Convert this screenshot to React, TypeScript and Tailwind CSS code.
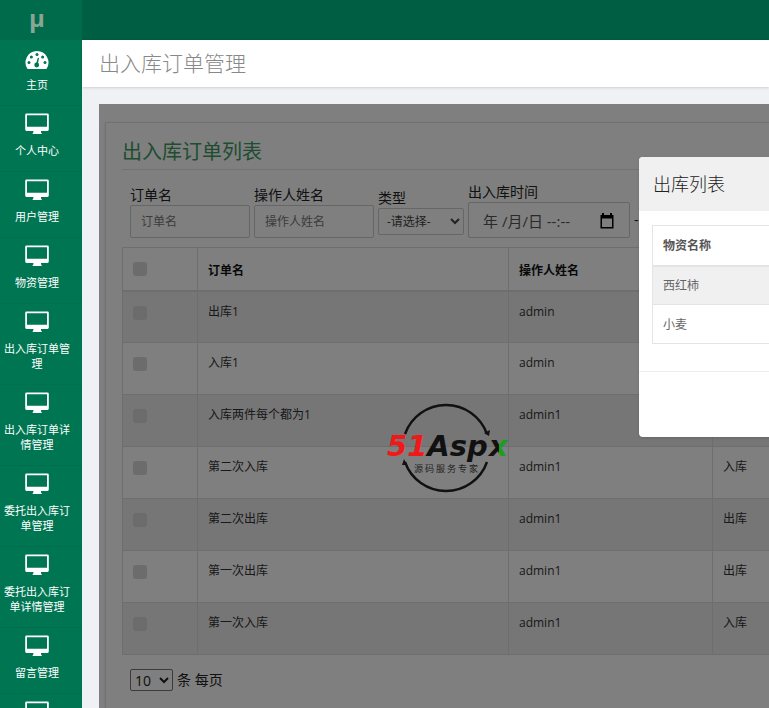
import { useState } from 'react';

const menu = ['个人中心', '用户管理', '物资管理', '出入库订单管理', '出入库订单详情管理', '委托出入库订单管理', '委托出入库订单详情管理', '留言管理'];

const orders = [
  { name: '出库1', operator: 'admin', type: '出库' },
  { name: '入库1', operator: 'admin', type: '入库' },
  { name: '入库两件每个都为1', operator: 'admin1', type: '入库' },
  { name: '第二次入库', operator: 'admin1', type: '入库' },
  { name: '第二次出库', operator: 'admin1', type: '出库' },
  { name: '第一次出库', operator: 'admin1', type: '出库' },
  { name: '第一次入库', operator: 'admin1', type: '入库' },
];

const goods = ['西红柿', '小麦'];

function GaugeIcon() {
  return (
    <svg viewBox="0 0 24 20" className="h-5 w-6" aria-hidden="true">
      <path d="M12 1a11.500 11.500 0 0 1 9.700 17.600q-.3.500-1 .5H3.300q-.7 0-1-.5A11.500 11.500 0 0 1 12 1z" fill="#fff" />
      <g fill="#007552">
        <circle cx="4" cy="12.500" r="1.500" />
        <circle cx="6.400" cy="7" r="1.500" />
        <circle cx="12" cy="4.600" r="1.500" />
        <circle cx="17.600" cy="7" r="1.500" />
        <circle cx="20" cy="12.500" r="1.500" />
        <circle cx="11.700" cy="15" r="2.400" />
        <path d="M12.800 7.800l1.200.3-1.300 7-1.900-.4z" />
      </g>
    </svg>
  );
}

function DesktopIcon() {
  return (
    <svg viewBox="0 0 24 22" className="h-[22px] w-6" fill="currentColor" aria-hidden="true">
      <path
        fillRule="evenodd"
        d="M1.500 .5h21a1.300 1.300 0 0 1 1.300 1.300v14.800a1.300 1.300 0 0 1-1.300 1.300H16v1.500l.7.500v1H7.700v-1l.7-.5v-1.500H1.500A1.300 1.300 0 0 1 .2 16.600V1.800A1.300 1.300 0 0 1 1.500 .5zM2 2.300v11.500h20V2.300z"
      />
    </svg>
  );
}

function Sidebar() {
  return (
    <aside className="w-[82px] shrink-0 bg-[#007552] text-white">
      <a href="#home" className="flex h-10 items-center justify-center bg-[#006b4a] pr-2 pb-1 text-2xl font-bold text-[#8aa596]">
        μ
      </a>
      <nav className="text-[11px] leading-[15px]">
        <a href="#index" className="flex min-h-[66px] flex-col items-center border-b border-[#006f4d] pt-[10px] pr-2 pb-3">
          <GaugeIcon />
          <span className="mt-[7px] text-center">主页</span>
        </a>
        {menu.map((item) => (
          <a key={item} href="#menu" className="flex min-h-[66px] flex-col items-center border-b border-[#006f4d] pt-[7px] pr-[9px] pb-[13px] pl-px">
            <DesktopIcon />
            <span className="mt-2 w-[70px] text-center">{item}</span>
          </a>
        ))}
        <a href="#menu" aria-label="更多" className="flex min-h-[66px] flex-col items-center pt-[7px] pr-[9px] pl-px">
          <DesktopIcon />
        </a>
      </nav>
    </aside>
  );
}

function Filters() {
  return (
    <form className="flex items-end gap-1 pl-2 text-sm leading-5 text-[#222]">
      <div className="flex w-[120px] shrink-0 flex-col">
        <label htmlFor="order">订单名</label>
        <input id="order" placeholder="订单名" className="h-[33px] rounded-xs border border-[#ccc] px-[10px] text-xs placeholder:text-[#777]" />
      </div>
      <div className="flex w-[120px] shrink-0 flex-col">
        <label htmlFor="operator">操作人姓名</label>
        <input id="operator" placeholder="操作人姓名" className="h-[33px] rounded-xs border border-[#ccc] px-[10px] text-xs placeholder:text-[#777]" />
      </div>
      <div className="flex w-[86px] shrink-0 flex-col pb-[3px]">
        <label htmlFor="type">类型</label>
        <select id="type" className="h-[27px] rounded-xs border border-[#ccc] bg-white px-1 text-xs text-[#444]">
          <option>-请选择-</option>
        </select>
      </div>
      <div className="flex w-[162px] shrink-0 flex-col">
        <label htmlFor="time">出入库时间</label>
        <div className="flex h-9 items-center rounded-xs border border-[#ccc] pt-[2px] pr-[14px] pl-[14px]">
          <input id="time" defaultValue="年 /月/日 --:--" className="w-full min-w-0 text-[15px] text-[#555]" />
          <button type="button" aria-label="选择日期" className="pb-px">
            <svg viewBox="0 0 16 16" className="h-4 w-4" fill="#000" aria-hidden="true">
              <path fillRule="evenodd" d="M3 0h2v2h6V0h2v2h1.500v13.500h-13V2H3zM3 5.500V14h10V5.500z" />
            </svg>
          </button>
        </div>
      </div>
      <span className="pb-2">-</span>
    </form>
  );
}

function OrderTable() {
  return (
    <table className="mt-[9px] w-[820px] table-fixed border-collapse border border-[#dcdcdc] text-left text-xs text-[#333]">
      <thead>
        <tr className="h-[43px] border-b-2 border-[#dcdcdc] text-[#111]">
          <th className="w-[75px] border-r border-[#dcdcdc] pl-[10px]">
            <input type="checkbox" aria-label="全选" className="block size-[14px] appearance-none rounded-[3px] bg-[#d8d8d8]" />
          </th>
          <th className="w-[311px] border-r border-[#dcdcdc] pt-1 pl-[10px] font-bold">订单名</th>
          <th className="w-[204px] border-r border-[#dcdcdc] pt-1 pl-[10px] font-bold">操作人姓名</th>
          <th className="pt-1 pl-[10px] font-bold">类型</th>
        </tr>
      </thead>
      <tbody>
        {orders.map((order) => (
          <tr key={order.name} className="h-[52px] border-b border-[#dcdcdc] align-top leading-5 odd:bg-[#ececec]">
            <td className="border-r border-[#dcdcdc] pt-[14px] pl-[10px]">
              <input type="checkbox" aria-label={order.name} className="block size-[14px] appearance-none rounded-[3px] bg-[#d8d8d8]" />
            </td>
            <td className="border-r border-[#dcdcdc] pt-[10px] pl-[10px]">{order.name}</td>
            <td className="border-r border-[#dcdcdc] pt-[10px] pl-[10px]">{order.operator}</td>
            <td className="pt-[10px] pl-[10px]">{order.type}</td>
          </tr>
        ))}
      </tbody>
    </table>
  );
}

function Watermark() {
  return (
    <svg viewBox="0 0 124 92" className="absolute top-[298px] left-[288px] h-[92px] w-[124px]" aria-hidden="true">
      <defs>
        <linearGradient id="tail">
          <stop offset="0.55" stopColor="#111" />
          <stop offset="0.55" stopColor="#18a018" />
        </linearGradient>
      </defs>
      <g fill="none" stroke="#111" strokeWidth="2.400">
        <path d="M18 32A43.500 43.500 0 0 1 100 32" />
        <path d="M18 60A43.500 43.500 0 0 0 100 60" />
      </g>
      <path d="M97 31l5 3 1-6zM20 63l-5 0 2-6z" fill="#111" />
      <g fontFamily="'DejaVu Sans', sans-serif" fontStyle="italic" fontWeight="700" fontSize="29">
        <text x="0" y="54" fill="#111">
          <tspan fill="#f01818">51</tspan>Asp
        </text>
        <text x="102" y="54" fill="url(#tail)">x</text>
      </g>
      <text x="27" y="70" fill="#222" fontSize="9" fontFamily="'Noto Sans CJK SC', sans-serif">源 码 服 务 专 家</text>
    </svg>
  );
}

function GoodsDialog() {
  return (
    <section role="dialog" aria-label="出库列表" className="absolute top-[53px] left-[540px] h-[280px] w-[500px] overflow-hidden rounded-sm bg-white shadow-sm">
      <h3 className="flex h-[54px] items-center bg-[#f0f0f0] px-[14px] text-lg font-light text-[#222]">出库列表</h3>
      <div className="border-b border-[#eee] px-[13px] pt-[14px] pb-[27px]">
        <table className="w-full border-collapse border border-[#e4e4e4] text-left text-xs text-[#666]">
          <thead>
            <tr className="h-10 border-b-2 border-[#e4e4e4]">
              <th className="pt-px pl-[10px] font-bold text-[#555]">物资名称</th>
            </tr>
          </thead>
          <tbody>
            {goods.map((item) => (
              <tr key={item} className="h-[39px] border-b border-[#e4e4e4] odd:bg-[#f0f0f0]">
                <td className="pt-[2px] pl-[10px]">{item}</td>
              </tr>
            ))}
          </tbody>
        </table>
      </div>
    </section>
  );
}

export default function App() {
  const [size, setSize] = useState('10');

  return (
    <div className="flex h-screen overflow-hidden bg-[#eff1f5] font-['Open_Sans','Noto_Sans_CJK_SC',sans-serif]">
      <Sidebar />
      <div className="flex min-w-0 flex-1 flex-col">
        <header className="h-10 shrink-0 bg-[#005e42]" />
        <h1 className="flex h-[47px] shrink-0 items-center bg-white px-[17px] text-[21px] font-light text-[#888] shadow-sm">出入库订单管理</h1>
        <main className="relative mt-[17px] ml-[17px] flex-1 overflow-hidden bg-white pt-[18px] pl-[6px]">
          <div className="h-full border-t border-l border-[#e4e4e4] px-4 pt-[14px] shadow">
            <h2 className="mb-3 border-b border-[#e4e4e4] pb-[2px] text-xl leading-[30px] text-[#3c9a5f]">出入库订单列表</h2>
            <Filters />
            <OrderTable />
            <div className="mt-[14px] flex items-center gap-1 pl-2 text-sm text-[#222]">
              <select id="size" value={size} onChange={(e) => setSize(e.target.value)} className="h-[22px] w-[43px] rounded-xs border border-[#777] bg-white">
                <option>10</option>
                <option>25</option>
              </select>
              <label htmlFor="size">条 每页</label>
            </div>
          </div>
          <div className="absolute inset-0 bg-black/50" />
          <Watermark />
          <GoodsDialog />
        </main>
      </div>
    </div>
  );
}
